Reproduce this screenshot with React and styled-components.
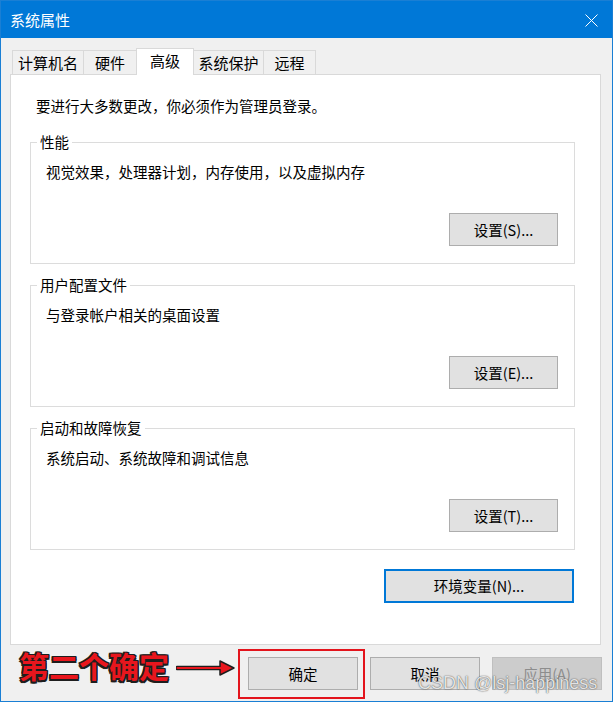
import React from "react";
import styled, { createGlobalStyle } from "styled-components";

const Global = createGlobalStyle`
  html, body { margin: 0; padding: 0; background: #ffffff; }
  body { font-family: "Noto Sans CJK SC", "Noto Sans", sans-serif; }
  * { box-sizing: border-box; }
`;

const FONT = `"Noto Sans CJK SC", "Noto Sans", sans-serif`;

const Window = styled.div`
  width: 613px;height: 702px;border: 1px solid #1a7fd4;background: #f0f0f0;display: flex;flex-direction: column;
`;

const TitleBar = styled.div`
  height: 37px;flex: none;background: #0078d7;color: #ffffff;display: flex;align-items: center;justify-content: space-between;padding: 0 14px 0 9px;
  font: 15px/20px ${FONT};
`;

const CloseBtn = styled.span`
  display: flex;width: 13px;height: 13px;margin-top: 1px;
`;

const Body = styled.div`
  flex: 1;display: flex;flex-direction: column;padding: 10px 11px 0 9px;min-height: 0;
`;

const TabStrip = styled.div`
  display: flex;align-items: flex-end;height: 26px;padding-left: 2px;flex: none;
`;

const Tab = styled.div`
  width: ${p => p.$w}px;height: ${p => (p.$active ? 27 : 24)}px;margin-left: ${p => (p.$first ? 0 : -1)}px;
  margin-bottom: ${p => (p.$active ? -1 : 0)}px;border: 1px solid #d9d9d9;border-bottom: none;
  background: ${p => (p.$active ? "#ffffff" : "#f0f0f0")};position: relative;z-index: ${p => (p.$active ? 2 : 1)};
  display: flex;align-items: center;justify-content: center;padding-bottom: ${p => (p.$active ? 2 : 0)}px;
  font: 15px/20px ${FONT};color: #000;
`;

const Panel = styled.div`
  flex: 1;background: #ffffff;border: 1px solid #d9d9d9;display: flex;flex-direction: column;padding: 21px 25px 0 19px;
`;

const Intro = styled.div`
  padding-left: 6px;font: 14.5px/20px ${FONT};color: #000;
`;

const Group = styled.fieldset`
  margin: ${p => p.$gap}px 0 0 0;height: 132px;border: 1px solid #dcdcdc;padding: 10px 16px 0 15px;min-width: 0;
`;

const Legend = styled.legend`
  margin-left: -9px;padding: 0 3px;font: 14.5px/20px ${FONT};color: #000;
`;

const Desc = styled.div`
  font: 14.5px/20px ${FONT};color: #000;
`;

const ButtonRow = styled.div`
  margin-top: 31px;display: flex;justify-content: flex-end;
`;

const Button = styled.button`
  width: ${p => p.$w}px;height: ${p => p.$h || 33}px;padding: 0;cursor: default;
  background: ${p => (p.$disabled ? "#cccccc" : "#e1e1e1")};
  border: ${p => (p.$focus ? "2px solid #0078d7" : p.$disabled ? "1px solid #bfbfbf" : "1px solid #adadad")};
  color: ${p => (p.$disabled ? "#8d8d8d" : "#000000")};font: 14.5px/20px ${FONT};
`;

const EnvRow = styled.div`
  margin-top: 19px;display: flex;justify-content: flex-end;padding-right: 1px;
`;

const Footer = styled.div`
  flex: none;position: relative;display: flex;justify-content: flex-end;gap: 12px;padding: 12px 0 11px 0;margin-right: -1px;
`;

const Highlight = styled.span`
  position: relative;display: flex;
  &::after{
    content: "";position: absolute;top: -8px;left: -10px;right: -7px;bottom: -9px;border: 2px solid #e3141c;pointer-events: none;
  }
`;

const Callout = styled.div`
  position: absolute;left: 9px;top: 0px;font: 700 30px/40px ${FONT};color: #e8161d;
  text-shadow: -1.5px -1.5px 0 #1e1e1e, 1.5px -1.5px 0 #1e1e1e, -1.5px 1.5px 0 #1e1e1e, 1.5px 1.5px 0 #1e1e1e,
    0 -1.5px 0 #1e1e1e, 0 1.5px 0 #1e1e1e, -1.5px 0 0 #1e1e1e, 1.5px 0 0 #1e1e1e;
`;

const Arrow = styled.svg`
  position: absolute;left: 166px;top: 13px;
`;

const Watermark = styled.div`
  position: absolute;left: 408px;top: 28px;font: 18px/20px "Liberation Sans", Arial, sans-serif;white-space: nowrap;
  color: rgba(255, 255, 255, 0.85);text-shadow: 0 0 1px rgba(0, 0, 0, 0.65), 0 0 2px rgba(0, 0, 0, 0.3);pointer-events: none;
`;

const tabs = [
  { label: "计算机名", w: 72 },
  { label: "硬件", w: 54 },
  { label: "高级", w: 58, active: true },
  { label: "系统保护", w: 71 },
  { label: "远程", w: 53 },
];

const groups = [
  { title: "性能", desc: "视觉效果，处理器计划，内存使用，以及虚拟内存", btn: "设置(S)...", gap: 16 },
  { title: "用户配置文件", desc: "与登录帐户相关的桌面设置", btn: "设置(E)...", gap: 11 },
  { title: "启动和故障恢复", desc: "系统启动、系统故障和调试信息", btn: "设置(T)...", gap: 11 },
];

export default function App() {
  return (
    <>
      <Global />
      <Window>
        <TitleBar>
          <span>系统属性</span>
          <CloseBtn>
            <svg width="13" height="13" viewBox="0 0 13 13">
              <path d="M0.5 0.5 L12.5 12.5 M12.5 0.5 L0.5 12.5" stroke="#ffffff" strokeWidth="1" fill="none" />
            </svg>
          </CloseBtn>
        </TitleBar>
        <Body>
          <TabStrip>
            {tabs.map((t, i) => (
              <Tab key={t.label} $w={t.w} $active={t.active} $first={i === 0}>{t.label}</Tab>
            ))}
          </TabStrip>
          <Panel>
            <Intro>要进行大多数更改，你必须作为管理员登录。</Intro>
            {groups.map(g => (
              <Group key={g.title} $gap={g.gap}>
                <Legend>{g.title}</Legend>
                <Desc>{g.desc}</Desc>
                <ButtonRow>
                  <Button $w={109}>{g.btn}</Button>
                </ButtonRow>
              </Group>
            ))}
            <EnvRow>
              <Button $w={190} $h={34} $focus>环境变量(N)...</Button>
            </EnvRow>
          </Panel>
          <Footer>
            <Callout>第二个确定</Callout>
            <Arrow width="60" height="20" viewBox="0 0 60 20">
              <path d="M1 10 L46 10" stroke="#1e1e1e" strokeWidth="4.5" strokeLinecap="round" />
              <path d="M44 3 L58 10 L44 17 Z" fill="#e8161d" stroke="#1e1e1e" strokeWidth="1.5" strokeLinejoin="round" />
              <path d="M1.5 10 L46 10" stroke="#e8161d" strokeWidth="2" strokeLinecap="round" />
            </Arrow>
            <Highlight>
              <Button $w={110}>确定</Button>
            </Highlight>
            <Button $w={110}>取消</Button>
            <Button $w={110} $disabled>应用(A)</Button>
            <Watermark>CSDN @lsj-happiness</Watermark>
          </Footer>
        </Body>
      </Window>
    </>
  );
}
